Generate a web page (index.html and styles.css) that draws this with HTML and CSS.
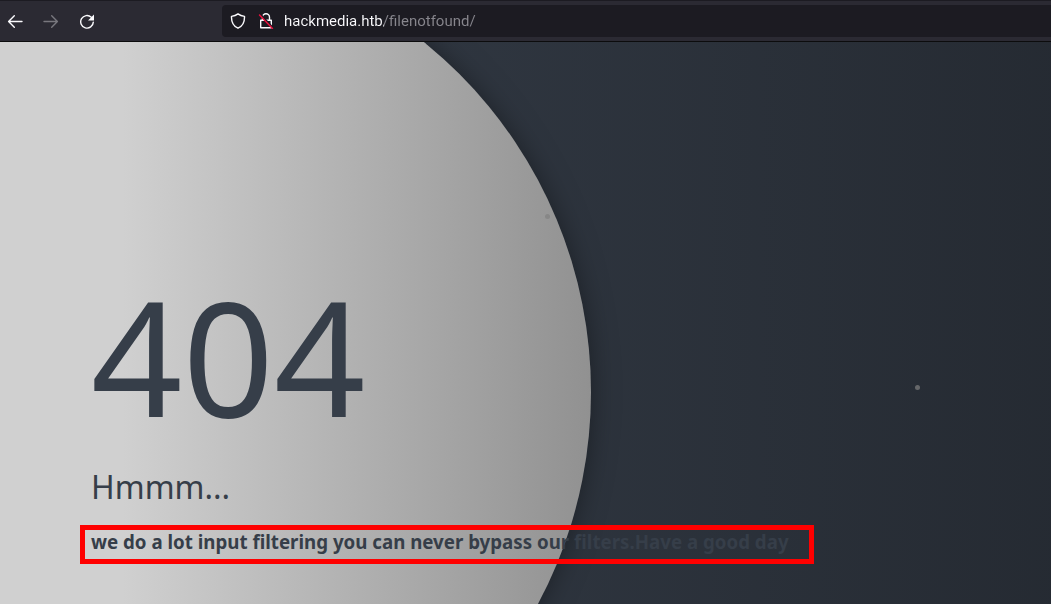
FILE: index.html
```html
<!DOCTYPE html>
<html lang="en">
<head>
<meta charset="utf-8">
<meta name="viewport" content="width=device-width, initial-scale=1">
<title>404</title>
<link rel="stylesheet" href="styles.css">
</head>
<body>
<header class="toolbar">
  <nav class="nav" aria-label="History">
    <button class="nav-button" type="button" aria-label="Back">
      <svg viewBox="0 0 16 16" width="16" height="16"><path d="M15 8.500H1.800M7.300 2.800 1.600 8.500l5.700 5.700"/></svg>
    </button>
    <button class="nav-button" type="button" aria-label="Forward" disabled>
      <svg viewBox="0 0 16 16" width="16" height="16"><path d="M1 8.500h13.200M8.700 2.800 14.400 8.500l-5.700 5.700"/></svg>
    </button>
    <button class="nav-button" type="button" aria-label="Reload">
      <svg viewBox="0 0 16 16" width="16" height="16"><path d="M12.300 4.200A6.300 6.300 0 1 0 14.300 9.100"/><path class="solid" d="M15 1.500v6H9z"/></svg>
    </button>
  </nav>
  <div class="address">
    <svg class="address-icon" viewBox="0 0 16 16" width="16" height="16"><path d="M8 .9C6.200 2.400 3.800 3.200 1.500 3.400 1.300 8.700 3.200 13 8 15.200c4.800-2.200 6.700-6.500 6.500-11.800C12.200 3.200 9.800 2.400 8 .9z"/></svg>
    <svg class="address-icon" viewBox="0 0 16 16" width="16" height="16"><path d="M4.500 7V4.300a3.500 3.500 0 0 1 7 0V7M2.700 7.300h10.600v7.400H2.700z"/><path class="gap" d="M2 1l13 14"/><path class="slash" d="M1.500 2l13 13.500"/></svg>
    <input class="url" type="text" aria-label="Address" value="hackmedia.htb/filenotfound/" spellcheck="false">
  </div>
</header>
<main class="sky">
  <div class="moon"></div>
  <span class="star star-left"></span>
  <span class="star star-right"></span>
  <section class="error">
    <h1 class="title">404</h1>
    <p class="subtitle">Hmmm...</p>
    <h3 class="description">we do a lot input filtering you can never bypass our filters.Have a good day</h3>
  </section>
</main>
</body>
</html>
```
FILE: styles.css
```css
* {
  box-sizing: border-box;
}

body {
  display: flex;
  flex-direction: column;
  min-height: 100vh;
  margin: 0;
  font-family: "Noto Sans", "Open Sans", sans-serif;
}

.toolbar {
  display: flex;
  gap: 123px;
  align-items: center;
  padding: 4px 0 4px 3px;
  border-top: 1px solid #1c1b22;
  border-bottom: 1px solid #0c0c0d;
  background: #2b2a33;
}

.nav {
  display: flex;
  gap: 12px;
}

.nav-button {
  display: grid;
  place-items: center;
  width: 24px;
  height: 32px;
  padding: 0;
  border: 0;
  background: none;
  color: #fbfbfe;
}

.nav-button:disabled {
  color: #78777e;
}

svg {
  fill: none;
  stroke: currentColor;
  stroke-width: 1.4;
  stroke-linecap: round;
  stroke-linejoin: round;
}

.solid {
  fill: currentColor;
  stroke: none;
}

.gap {
  stroke: #1c1b22;
  stroke-width: 2;
}

.slash {
  stroke: #f0103f;
}

.address {
  display: flex;
  flex: 1;
  gap: 12px;
  align-items: center;
  height: 32px;
  padding-left: 8px;
  border-radius: 4px 0 0 4px;
  background: #1c1b22;
  color: #fbfbfe;
}

.address-icon {
  flex: none;
}

.url {
  flex: 1;
  min-width: 0;
  height: 32px;
  margin-left: -2px;
  padding: 0;
  border: 0;
  outline: 0;
  background: linear-gradient(90deg, #fbfbfe 100px, #87868d 100px);
  background-clip: text;
  -webkit-background-clip: text;
  color: transparent;
  font: 15px Roboto, "Noto Sans", sans-serif;
}

.sky {
  position: relative;
  flex: 1;
  overflow: hidden;
  background: linear-gradient(90deg, #2f3640 41%, #181b20 182%);
}

.moon {
  position: absolute;
  top: -100px;
  left: -309px;
  width: 900px;
  height: 900px;
  border-radius: 50%;
  background: linear-gradient(90deg, #d0d0d0 48%, #919191 100%);
  box-shadow: 0 0 30px -4px rgba(0, 0, 0, 0.5);
}

.star {
  position: absolute;
  width: 5px;
  height: 5px;
  border-radius: 50%;
  background: #808080;
}

.star-left {
  top: 172px;
  left: 545px;
  opacity: 0.7;
}

.star-right {
  top: 343px;
  left: 915px;
  opacity: 0.7;
}

.error {
  position: relative;
  padding: 203px 80px 40px;
  color: #363e49;
}

.title,
.subtitle,
.description {
  margin: 0;
}

.title {
  padding-left: 11px;
  font-size: 160px;
  font-weight: 400;
  line-height: 220px;
}

.subtitle {
  padding-left: 11px;
  font-size: 32px;
  line-height: 44px;
}

.description {
  width: fit-content;
  margin-top: 16px;
  padding: 0 20px 5px 6px;
  border: 5px solid #ff0000;
  line-height: 24px;
}
```
